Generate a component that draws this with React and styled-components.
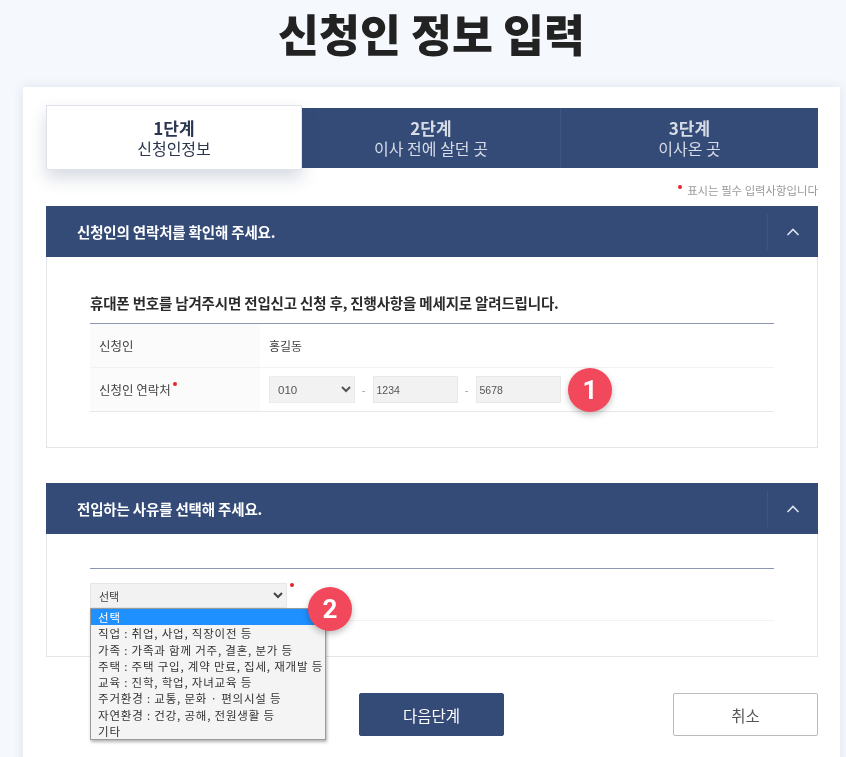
import React from 'react';
import styled, { createGlobalStyle } from 'styled-components';

const FONT = `"Noto Sans CJK KR", "Noto Sans", sans-serif`;
const NAVY = '#344b78';

const Global = createGlobalStyle`
  html, body { margin: 0; padding: 0; background: #f5f8fd; }
  body { font-family: ${FONT}; overflow: hidden; }
  * { box-sizing: border-box; }
`;

const Page = styled.div`
  width: 846px; height: 757px; overflow: hidden; background: #f5f8fd;
  filter: blur(0.55px);
`;
const Title = styled.h1`
  margin: 0; height: 87px; padding: 0 0 0 17px; text-align: center;
  font-size: 44.5px; line-height: 66px; font-weight: 900; color: #222; letter-spacing: 0;
`;
const Card = styled.main`
  margin: 0 6px 0 23px; height: 700px; background: #fff; padding: 21px 22px 0 23px;
  box-shadow: 0 0 10px rgba(60, 80, 120, 0.12);
`;
const Steps = styled.ol`
  display: grid; grid-template-columns: 256px 258px 258px; height: 60px; margin: 0; padding: 0; list-style: none;
  background: ${NAVY};
`;
const Step = styled.li`
  display: flex; flex-direction: column; align-items: center; justify-content: center;
  color: ${p => p.$active ? '#2a3550' : '#d7dce6'};
  background: ${p => p.$active ? '#fff' : 'transparent'};
  margin: ${p => p.$active ? '-3px 0 -2px' : '0'};
  border: ${p => p.$active ? '1px solid #dfe2ea' : 'none'};
  border-left: ${p => p.$last ? '1px solid #3e5583' : ''};
  box-shadow: ${p => p.$active ? '0 8px 16px rgba(50, 70, 110, 0.2)' : 'none'};
  position: relative;
`;
const StepNum = styled.strong`font-size: 17px; line-height: 21px; font-weight: 700;`;
const StepName = styled.span`font-size: 16px; line-height: 21px; font-weight: 400;`;
const Notice = styled.p`
  margin: 0; height: 38px; padding-top: 15px; text-align: right; font-size: 11.4px; line-height: 15px; color: #999;
`;
const Dot = styled.i`
  display: inline-block; width: 4px; height: 4px; border-radius: 50%; background: #e8202e;
  vertical-align: ${p => p.$up || 6}px; margin: ${p => p.$gap || '0 5px 0 0'};
`;
const Section = styled.section`
  height: ${p => p.$h}px; margin-bottom: 36px; border: 1px solid #e2e5ea; border-top: none; position: relative;
  &:first-of-type { margin-bottom: 35px; }
`;
const SectionHead = styled.header`
  height: 51px; margin: 0 -1px; background: ${NAVY}; display: flex; align-items: center; justify-content: space-between;
  color: #fff; font-size: 14.5px; font-weight: 700; padding-left: 31px; letter-spacing: -0.17px;
`;
const Toggle = styled.span`
  width: 51px; height: 36px; display: flex; align-items: center; justify-content: center;
  border-left: 1px solid #3e5583; color: #dfe4ec;
`;
const SectionBody = styled.div`padding: ${p => p.$pad || '0'}; margin: 0 43px;`;
const Lead = styled.h2`
  margin: 0; height: 30px; font-size: 14.5px; line-height: 20px; font-weight: 700; color: #2b2b2b; letter-spacing: -0.17px;
`;
const Table = styled.div`border-top: 1px solid #8a99b0;`;
const Row = styled.div`
  display: grid; grid-template-columns: 170px 1fr; height: 44px; border-bottom: 1px solid ${p => p.$line || '#f1f2f4'};
`;
const Th = styled.div`
  background: #fbfbfb; display: flex; align-items: center; padding-left: 9px; font-size: 12.5px; color: #444;
`;
const Td = styled.div`
  display: flex; align-items: center; padding-left: 9px; font-size: 12px; color: #444; position: relative;
`;
const Sel = styled.select`
  width: 86px; height: 27px; background: #f2f2f2; border: 1px solid #ececec; font-family: "Liberation Sans", sans-serif;
  font-size: 11.5px; color: #555; padding-left: 4px; outline: none;
`;
const Dash = styled.span`width: 17.5px; text-align: center; color: #999; font-size: 11px;`;
const Field = styled.input`
  width: 85.5px; height: 27px; background: #f2f2f2; border: 1px solid #e8e8e8; padding: 0 0 0 3px;
  font-family: "Liberation Sans", sans-serif; font-size: 10.5px; color: #555; outline: none;
`;
const Badge = styled.span`
  position: absolute; left: ${p => p.$x}px; top: ${p => p.$y}px; width: 44px; height: 44px; border-radius: 50%;
  background: #f2485c; color: #fff; font: 700 26px/44px "Roboto", sans-serif; text-align: center; z-index: 3;
  box-shadow: 0 3px 6px rgba(0, 0, 0, 0.25);
`;
const ReasonSelect = styled.select`
  width: 197px; height: 25px; background: #f2f2f2; border: 1px solid #e6e6e6; font-family: ${FONT};
  font-size: 11px; color: #444; padding-left: 4px; outline: none;
`;
const ReasonRow = styled.div`
  margin-top: 34px; border-top: 1px solid #8a99b0; height: 53px; padding-top: 14px; border-bottom: 1px solid #f1f2f4;
  display: flex; align-items: flex-start; position: relative;
`;
const Options = styled.ul`
  position: absolute; left: 0; top: 39px; width: 236px; height: 132px; margin: 0; padding: 0; list-style: none; z-index: 2;
  background: #f4f4f4; border: 1px solid #9a9a9a; box-shadow: 1px 2px 3px rgba(0,0,0,0.3);
`;
const Option = styled.li`
  height: 16.3px; line-height: 16px; font-size: 11.5px; padding-left: 7px; white-space: nowrap; letter-spacing: 0.8px;
  color: ${p => p.$sel ? '#fff' : '#333'}; background: ${p => p.$sel ? '#1e90ff' : 'transparent'};
`;
const Actions = styled.div`
  display: flex; margin-top: 36px; padding-left: 313px; gap: 169px; 
`;
const Btn = styled.button`
  width: 146px; height: 43px; border-radius: 2px; font-family: ${FONT}; font-size: 15.5px;
  background: ${p => p.$primary ? NAVY : '#fff'}; color: ${p => p.$primary ? '#fff' : '#555'};
  border: 1px solid ${p => p.$primary ? NAVY : '#bbb'};
`;
const Up = () => (
  <svg width="14" height="8" viewBox="0 0 14 8" fill="none" stroke="currentColor" strokeWidth="1.6"><path d="M1.5 7 7 1.5 12.5 7" /></svg>
);

const reasons = ['선택','직업 : 취업, 사업, 직장이전 등','가족 : 가족과 함께 거주, 결혼, 분가 등','주택 : 주택 구입, 계약 만료, 집세, 재개발 등','교육 : 진학, 학업, 자녀교육 등','주거환경 : 교통, 문화 · 편의시설 등','자연환경 : 건강, 공해, 전원생활 등','기타'];

export default function App() {
  return (
    <Page>
      <Global />
      <Title>신청인 정보 입력</Title>
      <Card>
        <Steps>
          <Step $active><StepNum>1단계</StepNum><StepName>신청인정보</StepName></Step>
          <Step><StepNum>2단계</StepNum><StepName>이사 전에 살던 곳</StepName></Step>
          <Step $last><StepNum>3단계</StepNum><StepName>이사온 곳</StepName></Step>
        </Steps>
        <Notice><Dot />표시는 필수 입력사항입니다</Notice>
        <Section $h={242}>
          <SectionHead>신청인의 연락처를 확인해 주세요.<Toggle><Up /></Toggle></SectionHead>
          <SectionBody $pad="36px 0 0">
            <Lead>휴대폰 번호를 남겨주시면 전입신고 신청 후, 진행사항을 메세지로 알려드립니다.</Lead>
            <Table>
              <Row><Th>신청인</Th><Td>홍길동</Td></Row>
              <Row $line="#e6e8ec">
                <Th>신청인 연락처<Dot $gap="0 0 12px 2px" /></Th>
                <Td>
                  <Sel defaultValue="010"><option>010</option></Sel>
                  <Dash>-</Dash>
                  <Field defaultValue="1234" />
                  <Dash>-</Dash>
                  <Field defaultValue="5678" />
                  <Badge $x={308} $y={0}>1</Badge>
                </Td>
              </Row>
            </Table>
          </SectionBody>
        </Section>
        <Section $h={174}>
          <SectionHead>전입하는 사유를 선택해 주세요.<Toggle><Up /></Toggle></SectionHead>
          <SectionBody>
            <ReasonRow>
              <ReasonSelect defaultValue="선택"><option>선택</option></ReasonSelect>
              <Dot $gap="0 0 0 3px" />
              <Options>
                {reasons.map((r, i) => <Option key={r} $sel={i === 0}>{r}</Option>)}
              </Options>
              <Badge $x={218} $y={18}>2</Badge>
            </ReasonRow>
          </SectionBody>
        </Section>
        <Actions>
          <Btn $primary>다음단계</Btn>
          <Btn>취소</Btn>
        </Actions>
      </Card>
    </Page>
  );
}
